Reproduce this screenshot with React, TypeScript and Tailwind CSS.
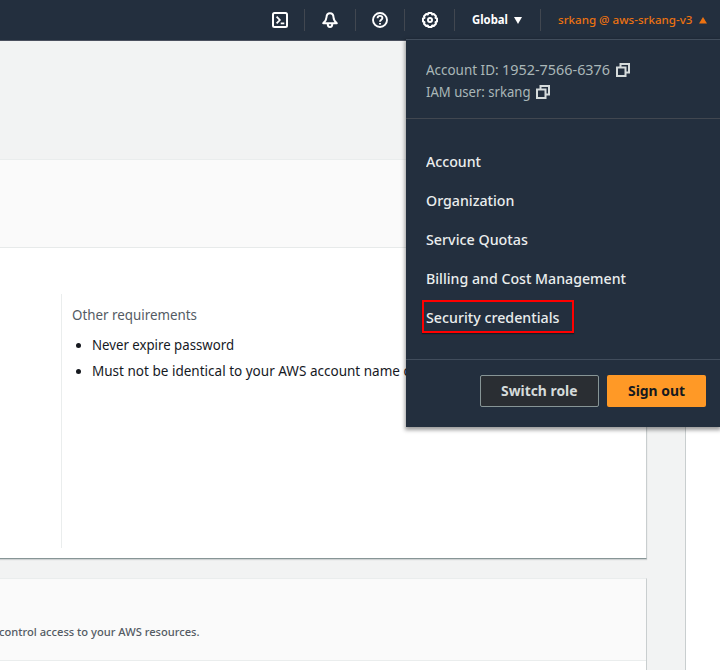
import type { ReactNode } from "react";

const menuItems: [string, string][] = [
  ["Account", "scale-x-[0.944]"],
  ["Organization", "scale-x-[0.947]"],
  ["Service Quotas", "scale-x-[0.953]"],
  ["Billing and Cost Management", "scale-x-[0.945]"],
];

function Fit({ className, children }: { className: string; children: ReactNode }) {
  return <span className={`inline-block origin-left whitespace-nowrap ${className}`}>{children}</span>;
}

function Divider() {
  return <div className="h-[22px] w-px shrink-0 bg-[#414750]" />;
}

function CopyIcon() {
  return (
    <svg width="14" height="14" viewBox="0 0 14 14" fill="none" stroke="#d5dbdb" strokeWidth="2">
      <path d="M1 4.500h8.500V13H1z" />
      <path d="M4.500 4.500V1H13v8.500H9.500" />
    </svg>
  );
}

function TerminalIcon() {
  return (
    <svg width="16" height="16" viewBox="0 0 16 16" fill="none" stroke="#fff" strokeWidth="2">
      <rect x="1" y="1" width="14" height="14" rx="1.5" />
      <path d="M4.600 4.600 7.800 8l-3.200 3.400M8.700 11.300h3.600" strokeWidth="1.800" />
    </svg>
  );
}

function BellIcon() {
  return (
    <svg width="16" height="16" viewBox="0 0 16 16" fill="none" stroke="#fff" strokeWidth="2" strokeLinejoin="round">
      <path d="M8 1.200C5.700 1.200 4.600 2.900 4.500 5.200 4.400 8 3.200 9.500 1.200 11.200H14.800C12.800 9.500 11.600 8 11.500 5.200 11.400 2.900 10.300 1.200 8 1.200Z" />
      <path d="M5.700 11.500c0 2.300.9 3.500 2.300 3.500s2.300-1.200 2.300-3.500" />
    </svg>
  );
}

function HelpIcon() {
  return (
    <svg width="16" height="16" viewBox="0 0 16 16" fill="none" stroke="#fff" strokeWidth="1.900">
      <circle cx="8" cy="8" r="7" />
      <path d="M5.600 6.200C5.600 4.600 6.600 3.900 8 3.900s2.400.8 2.400 2.100C10.400 7.700 8 7.700 8 9.700" />
      <path d="M8 10.900v1.700" />
    </svg>
  );
}

function GearIcon() {
  return (
    <svg width="16" height="16" viewBox="0 0 16 16" fill="none" stroke="#fff" strokeWidth="2" strokeLinejoin="round">
      <path d="M6.500 1h3l.7 1.500 1.600-.5 2.200 2.200-.5 1.600 1.500.7v3l-1.500.7.5 1.600-2.200 2.200-1.600-.5-.7 1.500h-3l-.7-1.500-1.600.5L2 11.800l.5-1.600L1 9.500v-3l1.500-.7L2 4.200 4.200 2l1.600.5z" />
      <circle cx="8" cy="8" r="2" />
    </svg>
  );
}

function AccountMenu() {
  return (
    <div className="absolute top-[39px] left-[406px] h-[388px] w-[314px] border-t border-[#414d5c] bg-[#232f3e] shadow-[0_2px_4px_1px_rgba(0,0,0,0.4)]">
      <div className="h-[79px] border-b border-[#414750] pt-[19px] pl-5 text-[14px] leading-[22px] text-[#aab7b8]">
        <div className="flex h-[22px] items-center">
          <div className="w-[76px]"><Fit className="scale-x-[0.96]">Account ID:</Fit></div>
          <div className="w-[114px]"><Fit className="scale-x-[1.028]">1952-7566-6376</Fit></div>
          <CopyIcon />
        </div>
        <div className="flex h-[22px] items-center">
          <div className="w-[110px]"><Fit className="scale-x-[0.937]">IAM user: srkang</Fit></div>
          <CopyIcon />
        </div>
      </div>
      <nav className="flex h-[241px] flex-col border-b border-[#414d5c] pt-[23px] pl-5 text-[15px] font-medium text-[#eaeded]">
        {menuItems.map(([label, fit]) => (
          <div key={label} className="flex h-[39px] items-center">
            <Fit className={fit}>{label}</Fit>
          </div>
        ))}
        <div className="mt-[2px] -ml-[4px] flex h-[33px] w-[152px] items-center border-2 border-[#f00] pt-[2px] pl-[2px] shadow-[0_1px_1px_rgba(0,0,0,0.4)]">
          <Fit className="scale-x-[0.949]">Security credentials</Fit>
        </div>
      </nav>
      <div className="flex justify-end gap-2 pt-[15px] pr-[14px] text-[14px] font-bold">
        <button className="flex h-8 w-[119px] items-center rounded-[2px] border border-[#879596] bg-[#2a2e33] pb-[2px] pl-5 text-[#d5dbdb]">
          <Fit className="scale-x-[0.991]">Switch role</Fit>
        </button>
        <button className="flex h-8 w-[99px] items-center rounded-[2px] bg-[#ff9926] pb-[2px] pl-[21px] text-[#16191f]">
          <Fit className="scale-x-[0.993]">Sign out</Fit>
        </button>
      </div>
    </div>
  );
}

export default function App() {
  return (
    <div className="relative flex h-[670px] w-[720px] flex-col overflow-hidden bg-[#f2f3f3] font-['Noto_Sans',sans-serif]">
      <header className="flex h-[41px] shrink-0 items-center border-b border-[#4b505e] bg-[#232f3e] pl-[272px]">
        <div className="flex w-8"><TerminalIcon /></div>
        <Divider />
        <div className="flex w-[50px] justify-center"><BellIcon /></div>
        <Divider />
        <div className="flex w-[48px] justify-center"><HelpIcon /></div>
        <Divider />
        <div className="flex w-[49px] justify-center"><GearIcon /></div>
        <Divider />
        <div className="flex w-[85px] items-center pl-[17px] text-[12px] font-bold text-white">
          <div className="w-[42px]"><Fit className="scale-x-[0.944]">Global</Fit></div>
          <svg width="8" height="7" viewBox="0 0 8 7"><path d="M0 0h8L4 7z" fill="#fff" /></svg>
        </div>
        <Divider />
        <div className="flex items-center pl-[17px] text-[11.5px] font-medium text-[#ec7211]">
          <div className="w-[141px]"><Fit className="scale-x-[1.008]">srkang @ aws-srkang-v3</Fit></div>
          <svg width="8" height="7" viewBox="0 0 8 7"><path d="M0 6.500h8L4 0z" fill="#ec7211" /></svg>
        </div>
      </header>
      <div className="flex min-h-0 flex-1">
        <main className="w-[647px] shrink-0 pt-[118px]">
          <section className="flex h-[400px] flex-col border-t border-r border-b border-t-[#eaeded] border-r-[#c9cecf] border-b-[#879596] bg-white shadow-[0_1px_1px_rgba(0,28,36,0.15)]">
            <div className="h-[88px] border-b border-[#e7eaea] bg-[#fafafa]" />
            <div className="mt-[46px] ml-[61px] h-[254px] border-l border-[#eaeded] pt-[10px] pl-[9.5px] text-[14px] leading-[22px] text-[#16191f]">
              <div className="text-[#545b64]"><Fit className="scale-x-[0.954]">Other requirements</Fit></div>
              <ul className="mt-[8px] flex flex-col gap-1">
                <li className="flex items-center">
                  <span className="mr-[11px] ml-[4px] size-[5px] rounded-full bg-[#16191f]" />
                  <Fit className="scale-x-[0.944]">Never expire password</Fit>
                </li>
                <li className="flex items-center">
                  <span className="mr-[11px] ml-[4px] size-[5px] rounded-full bg-[#16191f]" />
                  <Fit className="scale-x-[0.966]">Must not be identical to your AWS account name o</Fit>
                </li>
              </ul>
            </div>
          </section>
          <section className="mt-[19px] h-[92px] border-t border-r border-t-[#eaeded] border-r-[#c9cecf] bg-white">
            <div className="h-[82px] border-b border-[#eaeded] bg-[#fafafa] pt-[44px] text-[11.5px] leading-[18px] font-medium text-[#545b64]">
              <Fit className="-ml-px scale-x-[0.968]">control access to your AWS resources.</Fit>
            </div>
          </section>
        </main>
        <aside className="ml-[38px] flex-1 border-l border-[#c9cecf] bg-white" />
      </div>
      <AccountMenu />
    </div>
  );
}
